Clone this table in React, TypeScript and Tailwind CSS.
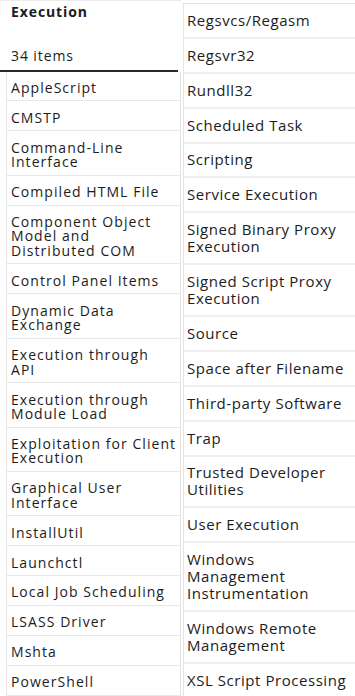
import React from 'react'

const left = [
  'AppleScript',
  'CMSTP',
  ['Command-Line', 'Interface'],
  'Compiled HTML File',
  ['Component Object', 'Model and', 'Distributed COM'],
  'Control Panel Items',
  ['Dynamic Data', 'Exchange'],
  ['Execution through', 'API'],
  ['Execution through', 'Module Load'],
  ['Exploitation for Client', 'Execution'],
  ['Graphical User', 'Interface'],
  'InstallUtil',
  'Launchctl',
  'Local Job Scheduling',
  'LSASS Driver',
  'Mshta',
  'PowerShell',
]

const right = [
  'Regsvcs/Regasm',
  'Regsvr32',
  'Rundll32',
  'Scheduled Task',
  'Scripting',
  'Service Execution',
  ['Signed Binary Proxy', 'Execution'],
  ['Signed Script Proxy', 'Execution'],
  'Source',
  'Space after Filename',
  'Third-party Software',
  'Trap',
  ['Trusted Developer', 'Utilities'],
  'User Execution',
  ['Windows', 'Management', 'Instrumentation'],
  ['Windows Remote', 'Management'],
  'XSL Script Processing',
]

const lines = (t: string | string[]) =>
  (Array.isArray(t) ? t : [t]).map((l, i) => <div key={i}>{l}</div>)

export default function App() {
  return (
    <div className="w-[355px] h-[696px] overflow-hidden bg-white flex text-[#1c1c1c] font-['Open_Sans',sans-serif] whitespace-nowrap">
      {/* Left: tactic header + first half */}
      <div className="w-[181px] shrink-0 flex flex-col border-t border-[#ececec]">
        <div className="h-[69px] shrink-0 flex flex-col justify-between pl-[11px] pt-[3px] pb-[6px] text-[14px] leading-[16px] tracking-[0.9px]">
          <div className="font-bold">Execution</div>
          <div>34 items</div>
        </div>
        <div className="h-[1.5px] w-[178px] shrink-0 bg-[#2a2a2a]" />
        <div className="ml-[6px] border-l border-r border-[#e6e6e6] flex flex-col">
          {left.map((t, i) => (
            <div
              key={i}
              className="shrink-0 pl-[4px] pt-[9.4px] pb-[5px] border-b border-[#e9e9e9] text-[14px] leading-[14.5px] tracking-[1.05px]"
            >
              {lines(t)}
            </div>
          ))}
        </div>
      </div>

      {/* Right: second half */}
      <div className="flex-1 flex flex-col pt-[3px] pl-[2px]">
        <div className="border-l border-t border-[#e6e6e6] flex flex-col">
          {right.map((t, i) => (
            <div
              key={i}
              className="shrink-0 pl-[3px] py-[7.95px] border-b-2 border-[#eeeeee] text-[15px] leading-[17px] tracking-[0.55px]"
            >
              {lines(t)}
            </div>
          ))}
        </div>
      </div>
    </div>
  )
}
